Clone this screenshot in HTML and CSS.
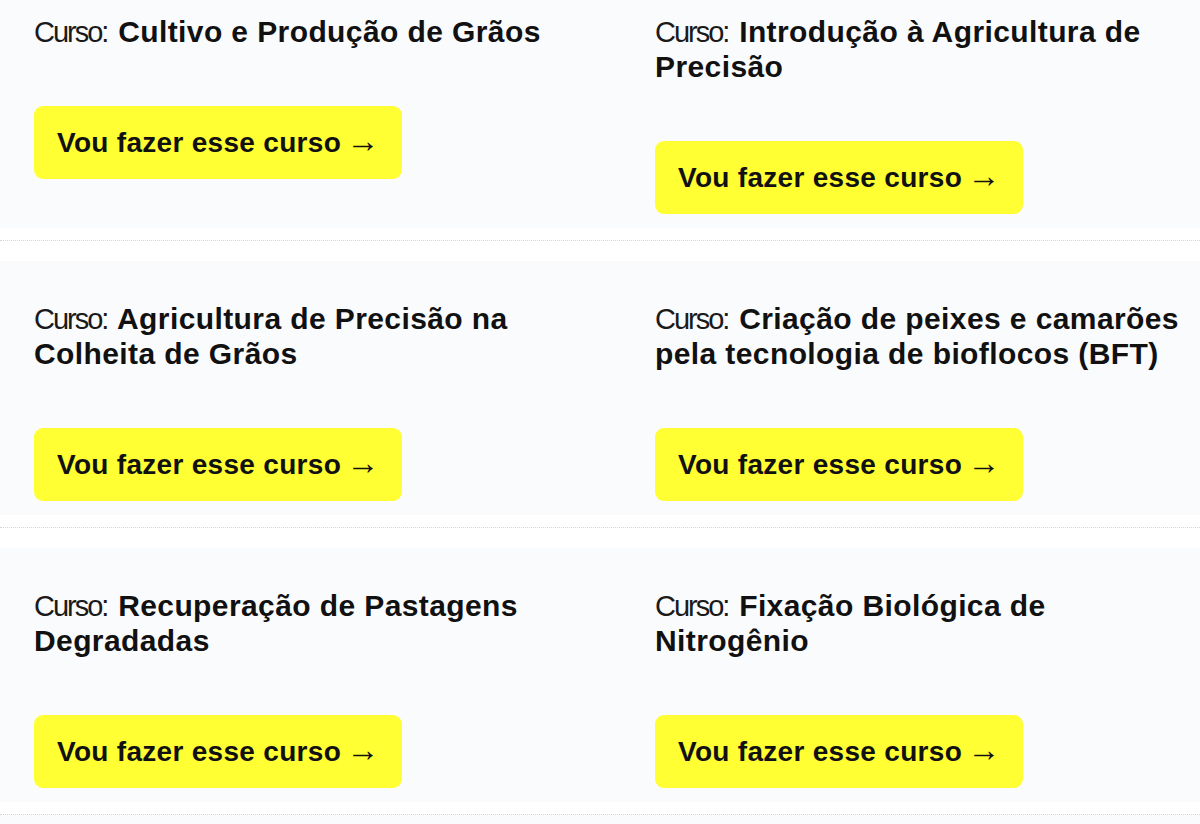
FILE: index.html
```html
<!DOCTYPE html>
<html lang="pt-BR">
<head>
    <meta charset="UTF-8">
    <meta name="viewport" content="width=device-width, initial-scale=1.0">
    <title>Cursos</title>
    <link rel="stylesheet" href="styles.css">
</head>
<body>
    <div id="courses">
        <div class="row">
            <div class="course">
                <h2 class="title"><span class="label">Curso:</span> Cultivo e Produção de Grãos</h2>
                <a class="btn" href="#">Vou fazer esse curso <span class="arrow">→</span></a>
            </div>
            <div class="course">
                <h2 class="title"><span class="label">Curso:</span> Introdução à Agricultura de Precisão</h2>
                <a class="btn" href="#">Vou fazer esse curso <span class="arrow">→</span></a>
            </div>
        </div>
        <div class="row">
            <div class="course">
                <h2 class="title"><span class="label">Curso:</span> Agricultura de Precisão na Colheita de Grãos</h2>
                <a class="btn" href="#">Vou fazer esse curso <span class="arrow">→</span></a>
            </div>
            <div class="course">
                <h2 class="title"><span class="label">Curso:</span> Criação de peixes e camarões pela tecnologia de bioflocos (BFT)</h2>
                <a class="btn" href="#">Vou fazer esse curso <span class="arrow">→</span></a>
            </div>
        </div>
        <div class="row">
            <div class="course">
                <h2 class="title"><span class="label">Curso:</span> Recuperação de Pastagens Degradadas</h2>
                <a class="btn" href="#">Vou fazer esse curso <span class="arrow">→</span></a>
            </div>
            <div class="course">
                <h2 class="title"><span class="label">Curso:</span> Fixação Biológica de Nitrogênio</h2>
                <a class="btn" href="#">Vou fazer esse curso <span class="arrow">→</span></a>
            </div>
        </div>
    </div>
</body>
</html>
```

FILE: styles.css
```css
body{
    margin: 0;
    background: #fafbfd;
    font-family: "Liberation Sans", Arial, sans-serif;
    color: #111;
}
#courses{
    margin-top: -46px;
}
.row{
    display: grid;
    grid-template-columns: 545px 1fr;
    column-gap: 76px;
    align-items: start;
    padding: 60px 0 26px 34px;
    border-bottom: 1px dotted #d6d6d6;
    background: linear-gradient(to bottom, #fff 0, #fff 20px, transparent 20px, transparent calc(100% - 12px), #fff calc(100% - 12px));
}
.course{
    display: flex;
    flex-direction: column;
    align-items: flex-start;
}
.title{
    margin: 0;
    max-width: 540px;
    font-size: 30px;
    line-height: 35px;
    font-weight: bold;
    letter-spacing: 0.4px;
}
.label{
    font-weight: normal;
    font-size: 29px;
    line-height: 29px;
    letter-spacing: -2px;
    margin-right: 2px;
    color: #1a1a1a;
}
.btn{
    display: inline-block;
    margin-top: 57px;
    height: 73px;
    line-height: 73px;
    padding: 0 23px;
    border-radius: 9px;
    background: #ffff33;
    color: #111;
    font-size: 28px;
    font-weight: bold;
    letter-spacing: 0.3px;
    text-decoration: none;
}
.arrow{
    font-weight: normal;
    font-size: 33px;
    letter-spacing: 0;
    line-height: 0;
    margin-left: -3px;
}
```
